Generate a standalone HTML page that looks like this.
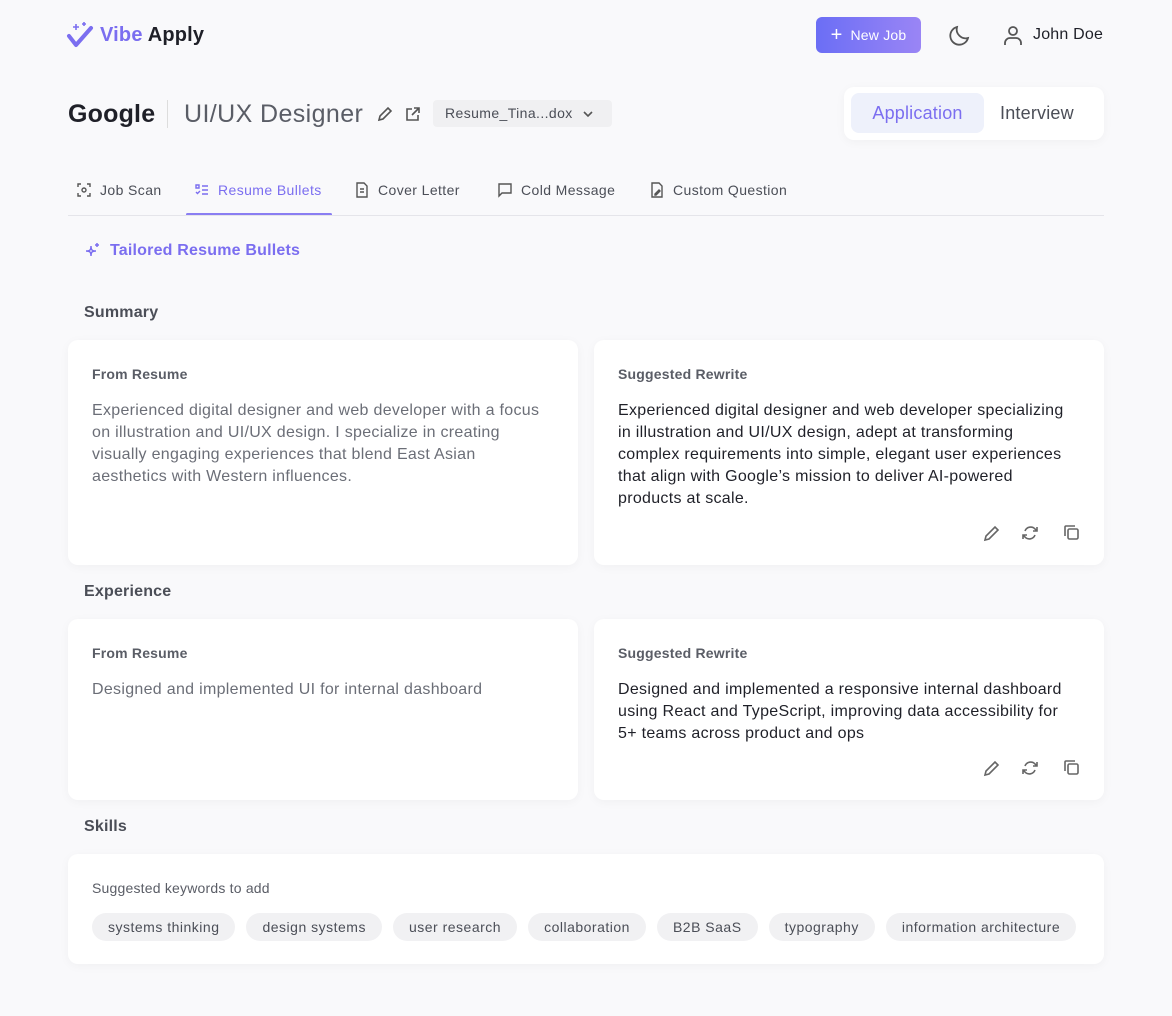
<!DOCTYPE html>
<html><head><meta charset="utf-8"><style>
*{box-sizing:border-box;margin:0;padding:0}
body{width:1172px;height:1016px;background:#f9f9fb;font-family:"Liberation Sans",sans-serif;color:#1f2028;position:relative;overflow:hidden;letter-spacing:0.2px}
.abs{position:absolute}
.card{position:absolute;background:#fff;border-radius:10px;box-shadow:0 2px 10px rgba(0,0,0,0.04)}
.lbl{position:absolute;left:24px;top:26px;font-size:14px;color:#5a5d66;font-weight:bold}
.txt{position:absolute;left:24px;top:60px;font-size:16px;line-height:22px;letter-spacing:0.3px}
.sec{position:absolute;left:84px;font-size:16px;color:#4b4e57;font-weight:bold}
.tab{position:absolute;top:182px;font-size:14px;color:#4b4e57;display:flex;align-items:center;gap:8px;letter-spacing:0.4px}
.chip{display:inline-block;background:#f1f1f3;border-radius:14px;height:28px;line-height:28px;padding:0 16px;font-size:14px;color:#4b4e57;margin-right:11px;letter-spacing:0.5px}
</style></head><body>
<svg class="abs" style="left:66px;top:22px" width="30" height="28" viewBox="0 0 30 28"><path d="M3 14l7 9 15-17" fill="none" stroke="#7b6ef0" stroke-width="4" stroke-linecap="round" stroke-linejoin="round"/><path d="M10 2v6M7 5h6M18 0v4M16 2h4" stroke="#7b6ef0" stroke-width="1.6"/></svg>
<div class="abs" style="left:100px;top:24px;font-size:20px;font-weight:bold"><span style="color:#7b6ef0">Vibe</span> Apply</div>
<div class="abs" style="left:816px;top:17px;width:105px;height:36px;border-radius:6px;background:linear-gradient(90deg,#6b6ef5,#9a85f5);color:#fff;font-size:14px;display:flex;align-items:center;justify-content:center;gap:8px"><span style="font-size:20px;line-height:1">+</span>New Job</div>
<svg class="abs" style="left:948px;top:23px" width="24" height="24" viewBox="0 0 24 24"><path d="M20 15A9 9 0 0 1 9 4a9 9 0 1 0 11 11z" fill="none" stroke="#555" stroke-width="1.8"/></svg>
<svg class="abs" style="left:1002px;top:24px" width="22" height="22" viewBox="0 0 22 22"><circle cx="11" cy="7" r="4" fill="none" stroke="#555" stroke-width="1.8"/><path d="M3 21v-2a5 5 0 0 1 5-5h6a5 5 0 0 1 5 5v2" fill="none" stroke="#555" stroke-width="1.8"/></svg>
<div class="abs" style="left:1033px;top:26px;font-size:16px">John Doe</div>
<div class="abs" style="left:68px;top:100px;font-size:25px;font-weight:bold">Google</div>
<div class="abs" style="left:167px;top:100px;width:1px;height:28px;background:#ddd"></div>
<div class="abs" style="left:184px;top:100px;font-size:25px;color:#5a5d66;letter-spacing:0.4px">UI/UX Designer</div>
<svg class="abs" style="left:376px;top:105px" width="18" height="18" viewBox="0 0 18 18"><path d="M3 15l1-4 8-8 3 3-8 8z" fill="none" stroke="#555" stroke-width="1.6"/></svg>
<svg class="abs" style="left:404px;top:105px" width="18" height="18" viewBox="0 0 18 18"><path d="M8 4H3v11h11v-5M10 3h5v5M15 3l-7 7" fill="none" stroke="#555" stroke-width="1.6"/></svg>
<div class="abs" style="left:433px;top:100px;width:179px;height:27px;background:#f0f0f2;border-radius:4px;font-size:14px;color:#4b4e57;line-height:27px;padding-left:12px;letter-spacing:0.4px">Resume_Tina...dox <svg style="margin-left:6px;vertical-align:middle" width="10" height="8" viewBox="0 0 10 8"><path d="M1 2l4 4 4-4" fill="none" stroke="#555" stroke-width="1.6"/></svg></div>
<div class="abs" style="left:844px;top:87px;width:260px;height:53px;background:#fff;border-radius:10px;box-shadow:0 2px 10px rgba(0,0,0,0.04)"></div>
<div class="abs" style="left:851px;top:93px;width:133px;height:40px;background:#eef1fb;border-radius:8px;color:#7b6ef0;font-size:18px;text-align:center;line-height:40px">Application</div>
<div class="abs" style="left:1000px;top:93px;font-size:18px;color:#4b4e57;line-height:40px">Interview</div>
<div class="tab" style="left:76px"><svg width="16" height="16" viewBox="0 0 16 16" fill="none" stroke="#555" stroke-width="1.4"><path d="M2 5V2h3M11 2h3v3M14 11v3h-3M5 14H2v-3"/><circle cx="8" cy="8" r="2"/></svg>Job Scan</div>
<div class="tab" style="left:194px;color:#7b6ef0"><svg width="16" height="16" viewBox="0 0 16 16" fill="none" stroke="#7b6ef0" stroke-width="1.4"><path d="M2 3h3v3H2zM2 10l1.5 1.5L6 9M8 4h6M8 8h6M8 12h6"/></svg>Resume Bullets</div>
<div class="abs" style="left:186px;top:213px;width:146px;height:3px;background:#8a7ef2;border-radius:2px"></div>
<div class="tab" style="left:354px"><svg width="16" height="16" viewBox="0 0 16 16" fill="none" stroke="#555" stroke-width="1.4"><path d="M3 1h7l3 3v11H3zM6 7h4M6 10h4"/></svg>Cover Letter</div>
<div class="tab" style="left:497px"><svg width="16" height="16" viewBox="0 0 16 16" fill="none" stroke="#555" stroke-width="1.4"><path d="M2 2h12v9H5l-3 3z"/></svg>Cold Message</div>
<div class="tab" style="left:649px"><svg width="16" height="16" viewBox="0 0 16 16" fill="none" stroke="#555" stroke-width="1.4"><path d="M3 1h7l3 3v11H3zM6 12l4-4 1 1-4 4H6z"/></svg>Custom Question</div>
<div class="abs" style="left:68px;top:215px;width:1036px;height:1px;background:#e5e5ea"></div>
<svg class="abs" style="left:83px;top:242px" width="18" height="18" viewBox="0 0 18 18" fill="none" stroke="#7b6ef0" stroke-width="1.5"><path d="M8 4c0 4 1 5 5 5-4 0-5 1-5 5 0-4-1-5-5-5 4 0 5-1 5-5zM14 1v4M12 3h4"/></svg>
<div class="abs" style="left:110px;top:242px;font-size:16px;font-weight:bold;color:#7b6ef0">Tailored Resume Bullets</div>
<div class="sec" style="top:304px">Summary</div>
<div class="card" style="left:68px;top:340px;width:510px;height:225px"><div class="lbl">From Resume</div><div class="txt" style="color:#6b6e77;width:458px">Experienced digital designer and web developer with a focus on illustration and UI/UX design. I specialize in creating visually engaging experiences that blend East Asian aesthetics with Western influences.</div></div>
<div class="card" style="left:594px;top:340px;width:510px;height:225px"><div class="lbl">Suggested Rewrite</div><div class="txt" style="width:458px">Experienced digital designer and web developer specializing in illustration and UI/UX design, adept at transforming complex requirements into simple, elegant user experiences that align with Google’s mission to deliver AI-powered products at scale.</div>
<svg class="abs" style="left:388px;top:183px" width="100" height="20" viewBox="0 0 100 20" fill="none" stroke="#666" stroke-width="1.6"><path d="M3 17l1-4 9-9 3 3-9 9z"/><path d="M43 8a6 6 0 0 1 10-2l2 2M55 4v4h-4M53 12a6 6 0 0 1-10 2l-2-2M41 16v-4h4"/><rect x="86" y="6" width="10" height="10" rx="1.5"/><path d="M83 13V4a1 1 0 0 1 1-1h9"/></svg></div>
<div class="sec" style="top:583px">Experience</div>
<div class="card" style="left:68px;top:619px;width:510px;height:181px"><div class="lbl">From Resume</div><div class="txt" style="color:#6b6e77">Designed and implemented UI for internal dashboard</div></div>
<div class="card" style="left:594px;top:619px;width:510px;height:181px"><div class="lbl">Suggested Rewrite</div><div class="txt" style="width:458px">Designed and implemented a responsive internal dashboard using React and TypeScript, improving data accessibility for 5+ teams across product and ops</div>
<svg class="abs" style="left:388px;top:139px" width="100" height="20" viewBox="0 0 100 20" fill="none" stroke="#666" stroke-width="1.6"><path d="M3 17l1-4 9-9 3 3-9 9z"/><path d="M43 8a6 6 0 0 1 10-2l2 2M55 4v4h-4M53 12a6 6 0 0 1-10 2l-2-2M41 16v-4h4"/><rect x="86" y="6" width="10" height="10" rx="1.5"/><path d="M83 13V4a1 1 0 0 1 1-1h9"/></svg></div>
<div class="sec" style="top:818px">Skills</div>
<div class="card" style="left:68px;top:854px;width:1036px;height:110px"><div class="lbl" style="font-weight:normal">Suggested keywords to add</div>
<div class="abs" style="left:24px;top:59px;white-space:nowrap;display:flex"><span class="chip">systems thinking</span><span class="chip">design systems</span><span class="chip">user research</span><span class="chip">collaboration</span><span class="chip">B2B SaaS</span><span class="chip">typography</span><span class="chip">information architecture</span></div></div>
</body></html>
